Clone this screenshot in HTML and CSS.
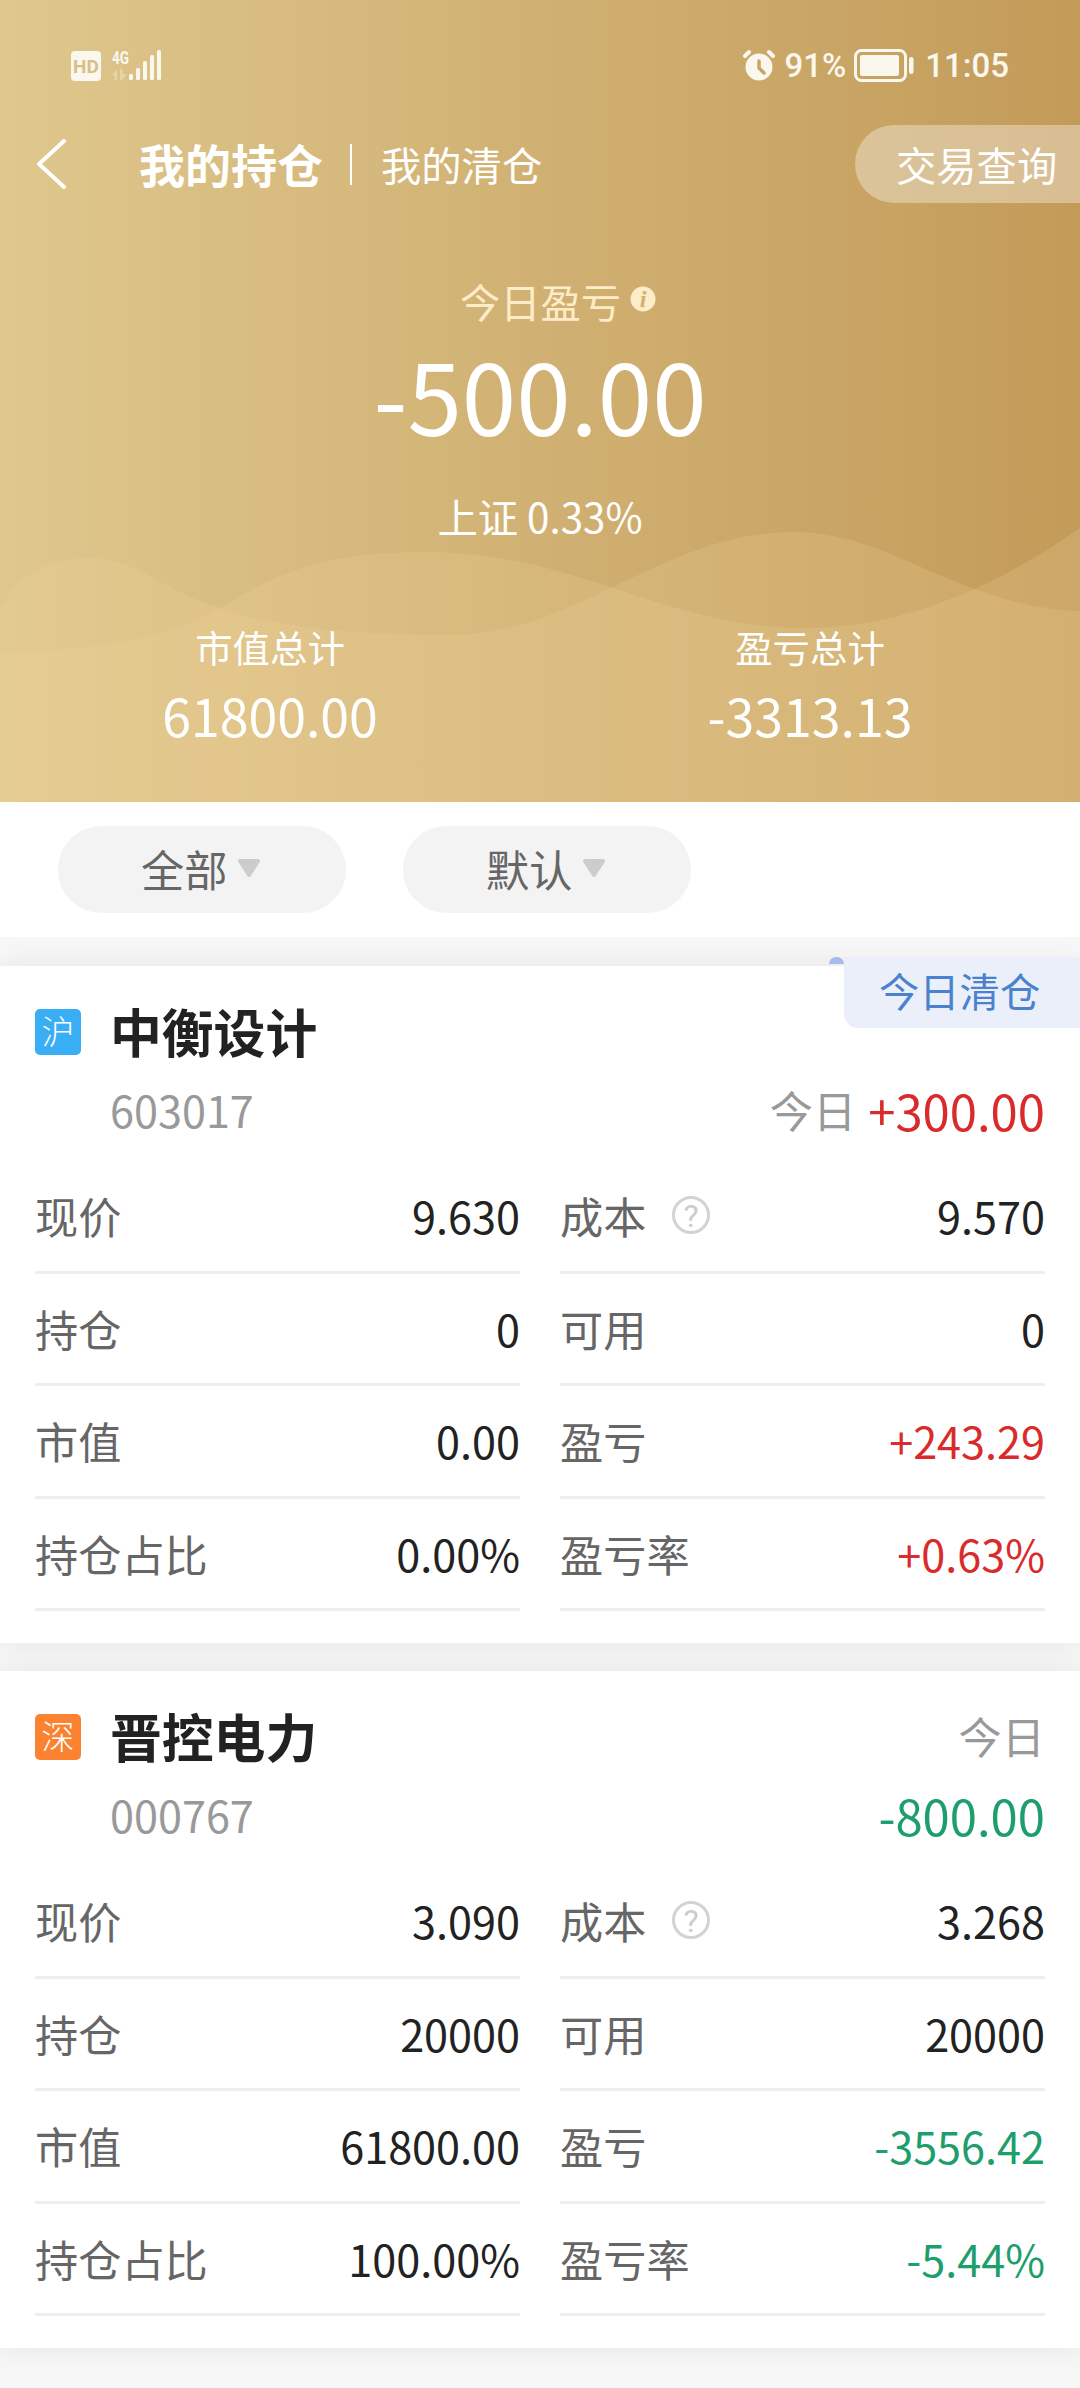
FILE: index.html
```html
<!DOCTYPE html>
<html lang="zh-CN">
<head>
<meta charset="UTF-8">
<meta name="viewport" content="width=device-width, initial-scale=1.0">
<title>我的持仓</title>
<link rel="stylesheet" href="styles.css">
</head>
<body>

<header class="header">
  <svg class="waves" viewBox="0 0 1080 802" aria-hidden="true">
    <path d="M0 607C22 572 50 558 86 558C140 558 160 590 220 608C290 632 370 634 448 635C580 635 660 532 795 532C890 532 960 607 1080 611V802H0Z"/>
    <path d="M0 652C100 650 160 640 220 608C280 570 330 552 424 552C580 552 660 628 806 628C920 628 1020 570 1080 528V802H0Z"/>
  </svg>

  <div class="status-bar">
    <div class="status-left">
      <span class="hd">HD</span>
      <svg class="signal" width="52" height="40" viewBox="0 -4 52 40" fill="#faf7ee">
        <text class="net" x="1" y="15" textLength="17" lengthAdjust="spacingAndGlyphs">4G</text>
        <path opacity=".35" d="M1 26l5-6v11H3.500v-5zM9 20h2.500v5H16l-5 6H9z"/>
        <rect x="18" y="25" width="4" height="6" rx="1.500"/>
        <rect x="25" y="19" width="4" height="12" rx="1.500"/>
        <rect x="32" y="12" width="4" height="19" rx="1.500"/>
        <rect x="39" y="6" width="4" height="25" rx="1.500"/>
        <rect x="46" y="1" width="4" height="30" rx="1.500"/>
      </svg>
    </div>
    <div class="status-right">
      <svg class="alarm" width="34" height="32" viewBox="0 0 34 32" fill="none" stroke="#faf7ee" stroke-linecap="round">
        <circle cx="17" cy="18" r="13.500" fill="#faf7ee" stroke="none"/>
        <path stroke-width="4" d="M3 7l4-4M27 3l4 4"/>
        <path stroke="#c9a566" stroke-width="3.500" d="M17 12v7l5 5"/>
      </svg>
      <span class="battery-text">91%</span>
      <svg class="battery" width="61" height="33" viewBox="0 0 61 33" fill="#faf7ee">
        <rect x="1.500" y="1.500" width="50" height="30" rx="6" fill="none" stroke="#faf7ee" stroke-width="3"/>
        <rect x="6" y="6" width="39" height="21" rx="2"/>
        <rect x="55" y="8" width="4.500" height="17" rx="2.200"/>
      </svg>
      <span class="clock">11:05</span>
    </div>
  </div>

  <nav class="nav">
    <svg class="back" width="30" height="52" viewBox="0 0 30 52" fill="none" stroke="#fff" stroke-width="4" stroke-linecap="round" stroke-linejoin="round">
      <path d="M27 3L2 26l25 23"/>
    </svg>
    <span class="tab active">我的持仓</span>
    <span class="divider"></span>
    <span class="tab">我的清仓</span>
    <a class="query">交易查询</a>
  </nav>

  <div class="today-label">
    今日盈亏
    <svg class="info" width="26" height="26" viewBox="0 0 26 26">
      <circle cx="13" cy="13" r="12.500" fill="#fdecc8"/>
      <text x="13" y="21" text-anchor="middle">i</text>
    </svg>
  </div>
  <div class="today-value">-500.00</div>
  <div class="index-line">上证 0.33%</div>

  <div class="totals">
    <div class="total">
      <div class="total-label">市值总计</div>
      <div class="total-value">61800.00</div>
    </div>
    <div class="total">
      <div class="total-label">盈亏总计</div>
      <div class="total-value">-3313.13</div>
    </div>
  </div>
</header>

<div class="filters">
  <div class="filter">全部<svg width="24" height="20" viewBox="0 0 24 20"><path d="M3 2h18L12 16z"/></svg></div>
  <div class="filter">默认<svg width="24" height="20" viewBox="0 0 24 20"><path d="M3 2h18L12 16z"/></svg></div>
</div>

<main class="list">
  <section class="card">
    <div class="tag">今日清仓</div>
    <div class="card-head">
      <span class="market sh">沪</span>
      <h2>中衡设计</h2>
    </div>
    <div class="card-sub">
      <span class="code">603017</span>
      <span class="today">今日</span>
      <span class="change up">+300.00</span>
    </div>
    <div class="rows">
      <div class="row"><span>现价</span><b>9.630</b></div>
      <div class="row">
        <span>成本</span>
        <svg class="help" width="40" height="40" viewBox="0 0 40 40"><circle cx="20" cy="20" r="17.500"/><text x="20" y="31.500" text-anchor="middle">?</text></svg>
        <b>9.570</b>
      </div>
      <div class="row"><span>持仓</span><b>0</b></div>
      <div class="row"><span>可用</span><b>0</b></div>
      <div class="row"><span>市值</span><b>0.00</b></div>
      <div class="row"><span>盈亏</span><b class="up">+243.29</b></div>
      <div class="row"><span>持仓占比</span><b>0.00%</b></div>
      <div class="row"><span>盈亏率</span><b class="up">+0.63%</b></div>
    </div>
  </section>

  <section class="card">
    <div class="card-head">
      <span class="market sz">深</span>
      <h2>晋控电力</h2>
      <span class="today">今日</span>
    </div>
    <div class="card-sub">
      <span class="code">000767</span>
      <span class="change down">-800.00</span>
    </div>
    <div class="rows">
      <div class="row"><span>现价</span><b>3.090</b></div>
      <div class="row">
        <span>成本</span>
        <svg class="help" width="40" height="40" viewBox="0 0 40 40"><circle cx="20" cy="20" r="17.500"/><text x="20" y="31.500" text-anchor="middle">?</text></svg>
        <b>3.268</b>
      </div>
      <div class="row"><span>持仓</span><b>20000</b></div>
      <div class="row"><span>可用</span><b>20000</b></div>
      <div class="row"><span>市值</span><b>61800.00</b></div>
      <div class="row"><span>盈亏</span><b class="down">-3556.42</b></div>
      <div class="row"><span>持仓占比</span><b>100.00%</b></div>
      <div class="row"><span>盈亏率</span><b class="down">-5.44%</b></div>
    </div>
  </section>
</main>

</body>
</html>
```
FILE: styles.css
```css
:root {
  --up: #d92b2b;
  --down: #1e9e6c;
  --text: #222;
  --label: #666;
  --muted: #999;
  --page: #f7f7f7;
  --status: #faf7ee;
}

* {
  box-sizing: border-box;
}

body {
  margin: 0;
  background: var(--page);
  color: var(--text);
  font-family: "Noto Sans CJK SC", sans-serif;
  font-size: 43.2px;
  min-height: 2388px;
  overflow-x: hidden;
}

/* header */
.header {
  position: relative;
  height: 802px;
  padding-top: 49px;
  background: linear-gradient(to right, #dfc78d 0%, #d0b072 52%, #c39b59 100%);
  color: #fff;
  text-align: center;
}

.header > * {
  position: relative;
}

.header .waves {
  position: absolute;
  left: 0;
  top: 0;
  width: 1080px;
  height: 802px;
  fill: rgba(241, 212, 158, .21);
}

.status-bar {
  display: flex;
  justify-content: space-between;
  height: 32px;
  padding: 0 71px;
  color: var(--status);
  font-family: Roboto, sans-serif;
  font-weight: 500;
  font-size: 33px;
  line-height: 34px;
}

.status-left,
.status-right {
  display: flex;
  align-items: center;
}

.hd {
  width: 30px;
  height: 30px;
  margin: 2px 10px 0 0;
  border-radius: 4px;
  background: var(--status);
  color: #d9bf85;
  font-size: 19px;
  font-weight: 700;
  line-height: 31px;
  text-align: center;
}

.net {
  font-size: 19px;
  font-weight: 700;
}

.battery-text {
  margin: 2px 8px 0 8px;
}

.clock {
  margin: 2px 0 0 10px;
}

.nav {
  display: flex;
  align-items: center;
  height: 78px;
  margin-top: 44px;
  padding-left: 37px;
  line-height: 78px;
}

.tab {
  font-size: 40.3px;
}

.tab.active {
  margin: -3px 0 0 72px;
  font-size: 46px;
  font-weight: 700;
}

.divider {
  width: 2px;
  height: 41px;
  margin: 0 29px 0 27px;
  background: #fff;
}

.query {
  width: 225px;
  height: 78px;
  margin-left: auto;
  padding-left: 41px;
  border-radius: 39px 0 0 39px;
  background: rgba(255, 255, 255, .35);
  font-size: 40.3px;
  text-align: left;
}

.today-label {
  display: flex;
  justify-content: center;
  gap: 9px;
  margin-top: 69px;
  padding-left: 36px;
  color: #fdecc8;
  font-size: 40.3px;
  line-height: 58px;
}

.info {
  margin-top: 14px;
}

.info text {
  fill: #cfb074;
  font: italic bold 24px "Liberation Serif", serif;
}

.today-value {
  margin-top: 3px;
  font-size: 98px;
  line-height: 120px;
}

.index-line {
  margin-top: 34px;
  font-size: 40.3px;
  line-height: 58px;
}

.totals {
  display: grid;
  grid-template-columns: 1fr 1fr;
  margin-top: 75px;
}

.total-label {
  font-size: 37.4px;
  line-height: 54px;
}

.total-value {
  margin-top: 3px;
  font-size: 51.8px;
  line-height: 76px;
}

/* filters */
.filters {
  position: relative;
  z-index: 1;
  display: flex;
  gap: 57px;
  height: 135px;
  padding: 24px 58px;
  background: #fff;
}

.filter {
  display: flex;
  align-items: center;
  width: 288px;
  height: 87px;
  padding: 0 0 3px 83px;
  border-radius: 44px;
  background: #f3f3f3;
  color: var(--label);
}

.filter svg {
  margin: 1px 0 0 10px;
  fill: #ccc;
  stroke: #ccc;
  stroke-width: 4;
  stroke-linejoin: round;
}

/* cards */
.list {
  position: relative;
  z-index: 0;
  display: flex;
  flex-direction: column;
  gap: 28px;
  padding-top: 29px;
}

.card {
  position: relative;
  height: 677px;
  padding: 33px 35px 0;
  background: #fff;
}

.card::before {
  content: "";
  position: absolute;
  inset: 0;
  z-index: -1;
  box-shadow: 0 0 28px rgba(0, 0, 0, .08);
}

.tag {
  position: absolute;
  right: 0;
  top: -9px;
  width: 236px;
  height: 71px;
  padding-left: 35px;
  border-radius: 0 0 0 14px;
  background: #eaeffa;
  color: #4a82cd;
  font-size: 40.3px;
  line-height: 66px;
}

.tag::before {
  content: "";
  position: absolute;
  right: 236px;
  top: 0;
  width: 15px;
  height: 7px;
  border-radius: 8px 8px 0 0;
  background: #a5bcec;
}

.card-head {
  display: flex;
  align-items: center;
  height: 66px;
}

.market {
  width: 46px;
  height: 46px;
  border-radius: 5px;
  color: #fff;
  font-size: 33px;
  font-weight: 300;
  line-height: 42px;
  text-align: center;
}

.sh {
  background: #3aaef4;
}

.sz {
  background: #fa8231;
}

.card-head h2 {
  margin: -3px 0 0 29px;
  font-size: 51.8px;
  line-height: 60px;
}

.today {
  margin-left: auto;
  color: var(--muted);
}

.card-head .today {
  margin-top: -4px;
}

.card-sub {
  display: flex;
  align-items: center;
  height: 89px;
  line-height: 89px;
}

.code {
  margin-left: 75px;
  color: var(--muted);
}

.change {
  margin-left: auto;
  font-size: 49px;
}

.today + .change {
  margin-left: 12px;
}

.up {
  color: var(--up);
}

.down {
  color: var(--down);
}

.rows {
  display: grid;
  grid-template-columns: 1fr 1fr;
  grid-auto-rows: 112.5px;
  column-gap: 40px;
  margin-top: 7px;
}

.row {
  display: flex;
  align-items: center;
  padding-bottom: 1px;
  border-bottom: 3px solid #eee;
  color: var(--label);
}

.row b {
  margin-left: auto;
  color: var(--text);
  font-weight: 400;
}

.row b.up {
  color: var(--up);
}

.row b.down {
  color: var(--down);
}

.help {
  margin: 0 0 0 25px;
}

.help circle {
  fill: none;
  stroke: #d3d3d3;
  stroke-width: 3;
}

.help text {
  fill: #ccc;
  font: 400 32px Roboto, sans-serif;
}
```
